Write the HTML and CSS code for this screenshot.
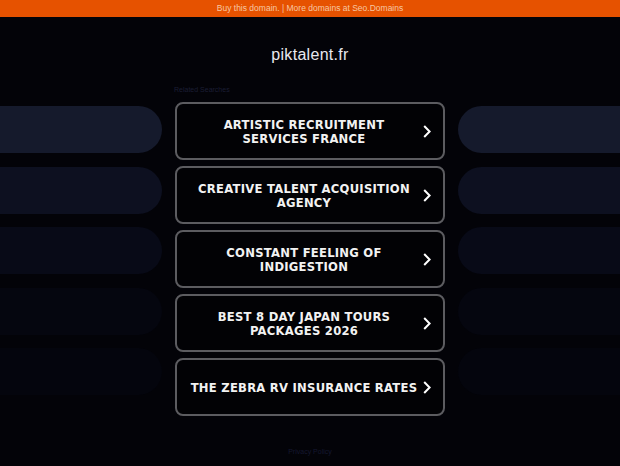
FILE: index.html
```html
<!DOCTYPE html>
<html lang="en">
<head>
<meta charset="utf-8">
<title>piktalent.fr</title>
<link rel="stylesheet" href="styles.css">
</head>
<body>
<div class="topbar">Buy this domain. | More domains at Seo.Domains</div>
<header class="header"><h1 class="domain">piktalent.fr</h1></header>
<main class="main">
  <div class="side side-left">
    <div class="pill p1"></div>
    <div class="pill p2"></div>
    <div class="pill p3"></div>
    <div class="pill p4"></div>
    <div class="pill p5"></div>
  </div>
  <div class="center">
    <div class="related">Related Searches</div>
    <a class="btn" href="#"><span class="btn-text">ARTISTIC RECRUITMENT SERVICES FRANCE</span><svg class="chev" viewBox="0 0 8 13" width="8" height="13"><path d="M1.2 1 L6.6 6.5 L1.2 12" fill="none" stroke="#fff" stroke-width="2"/></svg></a>
    <a class="btn" href="#"><span class="btn-text">CREATIVE TALENT ACQUISITION AGENCY</span><svg class="chev" viewBox="0 0 8 13" width="8" height="13"><path d="M1.2 1 L6.6 6.5 L1.2 12" fill="none" stroke="#fff" stroke-width="2"/></svg></a>
    <a class="btn" href="#"><span class="btn-text">CONSTANT FEELING OF INDIGESTION</span><svg class="chev" viewBox="0 0 8 13" width="8" height="13"><path d="M1.2 1 L6.6 6.5 L1.2 12" fill="none" stroke="#fff" stroke-width="2"/></svg></a>
    <a class="btn" href="#"><span class="btn-text">BEST 8 DAY JAPAN TOURS PACKAGES 2026</span><svg class="chev" viewBox="0 0 8 13" width="8" height="13"><path d="M1.2 1 L6.6 6.5 L1.2 12" fill="none" stroke="#fff" stroke-width="2"/></svg></a>
    <a class="btn" href="#"><span class="btn-text">THE ZEBRA RV INSURANCE RATES</span><svg class="chev" viewBox="0 0 8 13" width="8" height="13"><path d="M1.2 1 L6.6 6.5 L1.2 12" fill="none" stroke="#fff" stroke-width="2"/></svg></a>
  </div>
  <div class="side side-right">
    <div class="pill p1"></div>
    <div class="pill p2"></div>
    <div class="pill p3"></div>
    <div class="pill p4"></div>
    <div class="pill p5"></div>
  </div>
</main>
<footer class="footer">Privacy Policy</footer>
</body>
</html>
```

FILE: styles.css
```css
* { box-sizing: border-box; }
html, body { margin: 0; padding: 0; }
body {
  background: #030308;
  width: 620px;
  height: 466px;
  overflow: hidden;
  font-family: "Liberation Sans", Arial, sans-serif;
}
.topbar {
  height: 17px;
  background: #e65200;
  color: #f7c7a3;
  font-size: 8.5px;
  line-height: 17px;
  text-align: center;
}
.header {
  height: 67px;
  display: flex;
  justify-content: center;
  padding-top: 28px;
}
.domain {
  margin: 0;
  font-size: 16px;
  font-weight: normal;
  color: #e8e8f0;
  line-height: 20px;
  letter-spacing: 0.3px;
}
.main {
  display: flex;
  justify-content: space-between;
  align-items: flex-start;
}
.side {
  width: 162px;
  display: flex;
  flex-direction: column;
  gap: 13.5px;
  padding-top: 22px;
}
.pill { height: 47px; }
.side-left .pill { border-radius: 0 24px 24px 0; }
.side-right .pill { border-radius: 24px 0 0 24px; }
.p1 { background: #151a2c; }
.p2 { background: #0d1020; }
.p3 { background: #080a17; }
.p4 { background: #05060f; }
.p5 { background: #04050d; }
.center {
  width: 270px;
  display: flex;
  flex-direction: column;
  gap: 6px;
}
.related {
  height: 18px;
  margin-bottom: -6px;
  font-size: 7px;
  line-height: 12px;
  color: #1b1e34;
  margin-left: -1px;
}
.btn {
  position: relative;
  height: 58px;
  border: 2px solid #5c5c60;
  border-radius: 8px;
  background: #020205;
  display: flex;
  align-items: center;
  padding: 1px 24px 0 12px;
  text-decoration: none;
}
.btn-text {
  width: 230px;
  text-align: center;
  font-family: "DejaVu Sans", Verdana, sans-serif;
  font-weight: bold;
  font-size: 11.6px;
  line-height: 14px;
  color: #f2f2f2;
  letter-spacing: 0.25px;
}
.chev {
  position: absolute;
  right: 12px;
  top: 50%;
  margin-top: -6.5px;
}
.footer {
  text-align: center;
  font-size: 7px;
  color: #151830;
  padding-top: 32px;
}
```
